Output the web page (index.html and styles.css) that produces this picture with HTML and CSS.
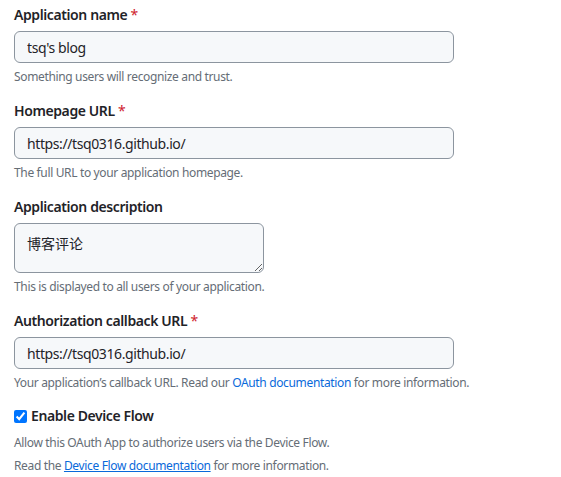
FILE: index.html
```html
<!DOCTYPE html>
<html lang="en">
<head>
<meta charset="utf-8">
<title>Register OAuth App</title>
<link rel="stylesheet" href="styles.css">
</head>
<body>
<form class="form">
  <div class="group">
    <label class="label">Application name <span class="req">*</span></label>
    <input class="field" type="text" value="tsq's blog">
    <p class="note">Something users will recognize and trust.</p>
  </div>
  <div class="group">
    <label class="label">Homepage URL <span class="req">*</span></label>
    <input class="field" type="text" value="https://tsq0316.github.io/">
    <p class="note">The full URL to your application homepage.</p>
  </div>
  <div class="group">
    <label class="label">Application description</label>
    <textarea class="area">博客评论</textarea>
    <p class="note">This is displayed to all users of your application.</p>
  </div>
  <div class="group">
    <label class="label">Authorization callback URL <span class="req">*</span></label>
    <input class="field" type="text" value="https://tsq0316.github.io/">
    <p class="note">Your application’s callback URL. Read our <a class="link" href="#">OAuth documentation</a> for more information.</p>
  </div>
  <div class="check-group">
    <label class="check-label"><input class="check" type="checkbox" checked> Enable Device Flow</label>
    <p class="note line">Allow this OAuth App to authorize users via the Device Flow.</p>
    <p class="note line">Read the <a class="link under" href="#">Device Flow documentation</a> for more information.</p>
  </div>
</form>
</body>
</html>
```
FILE: styles.css
```css
html, body {
  margin: 0;
  background: #ffffff;
}
body {
  padding: 5px 14px 0;
  font-family: "Noto Sans", "Noto Sans CJK SC", sans-serif;
  color: #1f2328;
  font-size: 14px;
  letter-spacing: -0.4px;
}
.form {
  display: flex;
  flex-direction: column;
}
.group {
  display: flex;
  flex-direction: column;
  align-items: flex-start;
  margin-bottom: 15px;
}
.label {
  font-weight: 600;
  font-size: 14px;
  line-height: 20px;
  margin-bottom: 6px;
}
.req {
  color: #cf222e;
  font-weight: 400;
}
.field, .area {
  box-sizing: border-box;
  font-family: inherit;
  font-size: 14px;
  line-height: 20px;
  letter-spacing: -0.4px;
  color: #1f2328;
  background: #f6f8fa;
  border: 1px solid #8c959f;
  border-radius: 6px;
  outline: none;
  margin: 0;
}
.field {
  width: 440px;
  height: 32px;
  padding: 5px 12px;
}
.area {
  width: 250px;
  height: 50px;
  padding: 9px 12px;
  resize: vertical;
  letter-spacing: 0;
  font-family: "Noto Sans CJK SC", sans-serif;
}
.note {
  margin: 5px 0 0;
  font-size: 12px;
  line-height: 18px;
  color: #656d76;
  letter-spacing: -0.35px;
}
.link {
  color: #0969da;
  text-decoration: none;
}
.link.under {
  text-decoration: underline;
}
.check-group {
  display: flex;
  flex-direction: column;
  margin-top: -1px;
}
.check-label {
  display: flex;
  align-items: center;
  font-weight: 600;
  font-size: 14px;
  line-height: 20px;
}
.check {
  width: 13px;
  height: 13px;
  margin: 0 4px 0 0;
  accent-color: #0075ff;
}
.line {
  margin-top: 8px;
  line-height: 18px;
}
.line + .line {
  margin-top: 5px;
}
```
